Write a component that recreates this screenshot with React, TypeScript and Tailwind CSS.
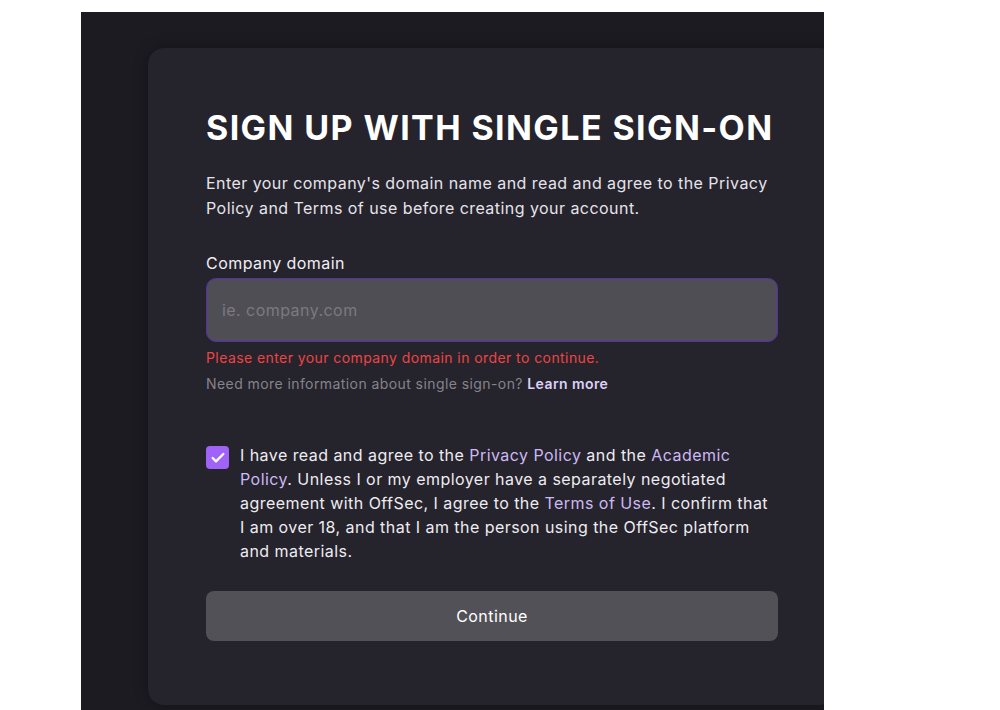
import { Check } from "lucide-react";

export default function App() {
  return (
    <div className="h-[710px] w-full overflow-hidden bg-white font-['Inter',sans-serif]">
      <div className="ml-[81px] mt-[12px] h-[698px] w-[743px] overflow-hidden bg-[#1c1b22] pl-[67px] pt-[36px]">
        <div className="h-[657px] w-[688px] rounded-2xl bg-[#25232c] px-[58px] pt-[59px] shadow-[0_0_14px_rgba(0,0,0,0.35)]">
          <h1 className="text-[34px] font-bold leading-[41px] tracking-[1.4px] text-white">
            SIGN UP WITH SINGLE SIGN-ON
          </h1>
          <p className="mt-[23px] text-base leading-[25px] tracking-[0.45px] text-[#e6e4ea]">
            Enter your company's domain name and read and agree to the Privacy Policy and Terms of use before creating
            your account.
          </p>

          <label className="mt-[30px] mb-[3px] block text-base leading-6 tracking-[0.45px] text-[#f1eff4]">
            Company domain
          </label>
          <input
            type="text"
            placeholder="ie. company.com"
            className="h-16 w-full rounded-[10px] border border-[#5a2cb0] bg-[#4f4e55] px-[15px] text-base tracking-[0.45px] text-white outline-none placeholder:text-[#7b7a81]"
          />
          <p className="mt-[6px] text-sm leading-5 tracking-[0.42px] text-[#ef4444]">
            Please enter your company domain in order to continue.
          </p>
          <p className="mt-[6px] text-sm leading-5 tracking-[0.42px] text-[#85838b]">
            Need more information about single sign-on?{" "}
            <a className="font-semibold text-[#ddd1f7]">Learn more</a>
          </p>

          <div className="mt-[49px] flex gap-[11px]">
            <span className="mt-[3px] flex h-[23px] w-[23px] shrink-0 items-center justify-center rounded-[4px] bg-[#a162f7]">
              <Check className="h-4 w-4 text-white" strokeWidth={3.5} />
            </span>
            <p className="pr-[8px] text-base leading-6 tracking-[0.45px] text-[#eeecf1]">
              I have read and agree to the <a className="text-[#cdb9f3]">Privacy Policy</a> and the{" "}
              <a className="text-[#cdb9f3]">Academic Policy</a>. Unless I or my employer have a separately negotiated
              agreement with OffSec, I agree to the <a className="text-[#cdb9f3]">Terms of Use</a>. I confirm that I
              am over 18, and that I am the person using the OffSec platform and materials.
            </p>
          </div>

          <button className="mt-[28px] h-[50px] w-full rounded-lg bg-[#525157] text-base tracking-[0.45px] text-white">
            Continue
          </button>
        </div>
      </div>
    </div>
  );
}
